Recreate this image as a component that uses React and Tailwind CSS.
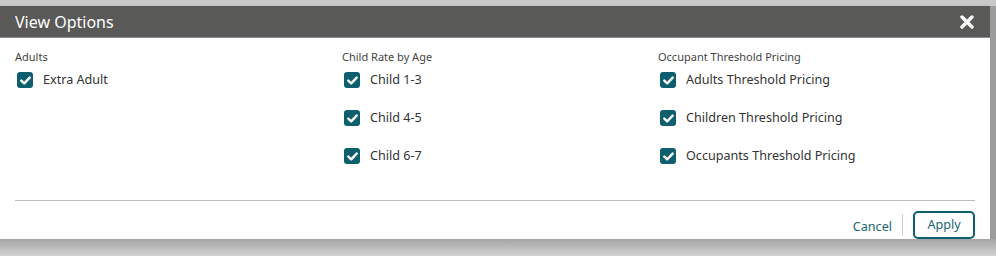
import { useState } from 'react'

const font = { fontFamily: '"Noto Sans", "Open Sans", sans-serif' }

function Check({ label, checked, onChange }) {
  return (
    <label className="flex items-center h-[38px] cursor-pointer">
      <span
        onClick={onChange}
        className={`w-[16px] h-[16px] rounded-[3px] flex items-center justify-center ml-[2px] ${checked ? 'bg-[#0d5f6d]' : 'border border-[#0d5f6d] bg-white'}`}
      >
        {checked && (
          <svg width="11" height="9" viewBox="0 0 11 9">
            <path d="M1.3 4.6 L4.2 7.3 L9.7 1.6" fill="none" stroke="white" strokeWidth="2.4" strokeLinecap="round" strokeLinejoin="round" />
          </svg>
        )}
      </span>
      <span className="ml-[10px] text-[12.6px] text-[#333]">{label}</span>
    </label>
  )
}

const groups = [
  { title: 'Adults', items: ['Extra Adult'], w: 'w-[327px]' },
  { title: 'Child Rate by Age', items: ['Child 1-3', 'Child 4-5', 'Child 6-7'], w: 'w-[316px]' },
  { title: 'Occupant Threshold Pricing', items: ['Adults Threshold Pricing', 'Children Threshold Pricing', 'Occupants Threshold Pricing'], w: 'flex-1' },
]

export default function App() {
  const [state, setState] = useState(() => {
    const s = {}
    groups.forEach((g) => g.items.forEach((i) => (s[i] = true)))
    return s
  })

  return (
    <div className="w-[996px] h-[256px] bg-[#cfcfcf] overflow-hidden flex flex-col" style={font}>
      <div className="h-[6px] bg-[#c9c9c9]" />
      <div className="flex">
        <div className="w-[990px] bg-white shadow-[0_2px_4px_rgba(0,0,0,0.35)]">
          {/* Header */}
          <div className="h-[32px] bg-[#595957] flex items-center justify-between pl-[15px] pr-[16px] border-b border-[#8a8a8a]">
            <span className="text-white text-[16px]">View Options</span>
            <svg width="14" height="14" viewBox="0 0 14 14">
              <path d="M2 2 L12 12 M12 2 L2 12" stroke="white" strokeWidth="3.4" strokeLinecap="round" />
            </svg>
          </div>

          {/* Body */}
          <div className="flex px-[15px] pt-[11px] h-[162px]">
            {groups.map((g) => (
              <div key={g.title} className={g.w}>
                <div className="text-[11px] text-[#444] leading-[16px]">{g.title}</div>
                <div className="-mt-[4px]">
                  {g.items.map((i) => (
                    <Check key={i} label={i} checked={state[i]} onChange={() => setState({ ...state, [i]: !state[i] })} />
                  ))}
                </div>
              </div>
            ))}
          </div>

          <div className="mx-[15px] border-t border-[#bdbdbd]" />

          {/* Footer */}
          <div className="h-[38px] flex items-center justify-end pr-[15px]">
            <button className="text-[12.6px] text-[#176574] mt-[15px] mr-[10px]">Cancel</button>
            <div className="w-px h-[22px] bg-[#cfcfcf] mt-[9px] mr-[10px]" />
            <button className="w-[62px] h-[28px] border-2 border-[#0d5f6d] rounded-[5px] text-[12.6px] text-[#176574] mt-[10px]">Apply</button>
          </div>
        </div>
        <div className="flex-1 bg-[#9c9c9c]" />
      </div>
      <div className="flex-1 bg-gradient-to-b from-[#a5a5a5] to-[#d2d2d2]" />
    </div>
  )
}
